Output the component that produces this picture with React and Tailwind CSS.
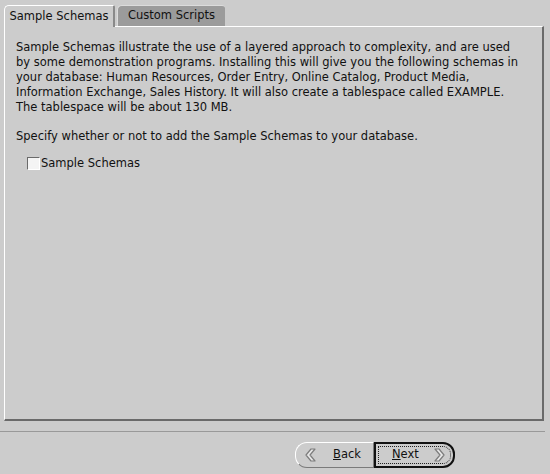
import React from "react";

const lines = [
    "Sample Schemas illustrate the use of a layered approach to complexity, and are used",
    "by some demonstration programs. Installing this will give you the following schemas in",
    "your database: Human Resources, Order Entry, Online Catalog, Product Media,",
    "Information Exchange, Sales History. It will also create a tablespace called EXAMPLE.",
    "The tablespace will be about 130 MB.",
];

function Chevron({ dir }) {
    // outlined chevron, light fill like the old look-and-feel arrows
    const pts = dir === "left" ? "10,1 5,7 10,13 6,13 1,7 6,1" : "2,1 7,7 2,13 6,13 11,7 6,1";
    return (
        <svg width="12" height="14" viewBox="0 0 12 14">
            <polygon points={pts} fill="#e8e8e8" stroke="#7d7d7d" strokeWidth="1.2" strokeLinejoin="round" />
        </svg>
    );
}

export default function App() {
    return (
        <div className="relative w-[550px] h-[474px] bg-[#cccccc] text-[11.5px] text-[#111] overflow-hidden font-['DejaVu_Sans',sans-serif]">
            <div className="flex items-end pl-[4px] pt-[5px]">
                <div className="relative z-10 -mb-px h-[22px] w-[111px] flex items-center justify-center bg-[#cccccc] border-l border-t border-white border-r-2 border-r-[#8a8a8a] rounded-tl-[5px] rounded-tr-[2px]">
                    Sample Schemas
                </div>
                <div className="ml-[2px] h-[21px] w-[108px] flex items-center justify-center bg-[#9b9b9b] border-l border-t border-[#dcdcdc] rounded-tl-[5px] rounded-tr-[3px]">
                    Custom Scripts
                </div>
            </div>

            <div className="ml-[4px] w-[540px] h-[395px] border-t border-l border-white border-r-2 border-b-2 border-r-[#6a6a6a] border-b-[#6a6a6a] pl-[11px] pt-[13px] leading-[15px]">
                {lines.map((l) => (
                    <div key={l} className="whitespace-nowrap">{l}</div>
                ))}
                <div className="mt-[14px] whitespace-nowrap">Specify whether or not to add the Sample Schemas to your database.</div>
                <label className="mt-[12px] ml-[11px] flex items-center">
                    <span className="w-[13px] h-[13px] bg-[#f4f4f4] border border-t-[#6a6a6a] border-l-[#6a6a6a] border-r-white border-b-white" />
                    <span className="ml-[1px]">Sample Schemas</span>
                </label>
            </div>

            <div className="mt-[10px] h-px w-[545px] bg-[#999999]" />

            <div className="mt-[10px] flex pl-[295px]">
                <div className="h-[26px] w-[79px] flex items-center rounded-l-[12px] border border-t-white border-l-white border-b-[#7a7a7a] border-r-[#7a7a7a] pl-[9px]">
                    <Chevron dir="left" />
                    <span className="ml-[16px]"><span className="underline">B</span>ack</span>
                </div>
                <div className="h-[26px] w-[81px] rounded-r-[12px] border-2 border-[#111] p-[2px]">
                    <div className="h-full flex items-center border border-dotted border-[#222] rounded-r-[8px] pl-[13px]">
                        <span><span className="underline">N</span>ext</span>
                        <span className="ml-[14px]"><Chevron dir="right" /></span>
                    </div>
                </div>
            </div>
        </div>
    );
}
